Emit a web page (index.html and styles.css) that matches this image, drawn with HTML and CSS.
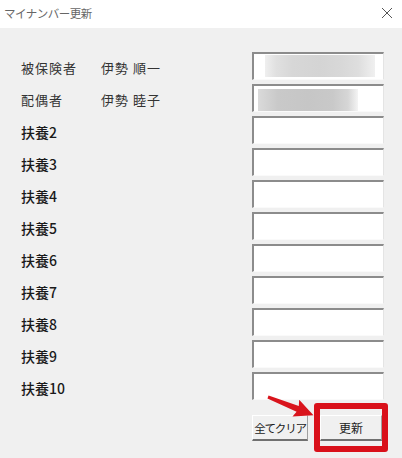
FILE: index.html
```html
<!DOCTYPE html>
<html lang="ja">
<head>
<meta charset="utf-8">
<link rel="stylesheet" href="styles.css">
</head>
<body>
<div class="window">
  <div class="titlebar">
    <span class="title">マイナンバー更新</span>
    <svg class="close" width="12" height="12" viewBox="0 0 12 12"><path d="M1 1 L11 11 M11 1 L1 11" stroke="#555" stroke-width="1" fill="none"/></svg>
  </div>
  <div class="form">
    <div class="row"><span class="label light">被保険者</span><span class="name">伊勢 順一</span><div class="box"><span class="blur b1"></span></div></div>
    <div class="row"><span class="label light">配偶者</span><span class="name">伊勢 睦子</span><div class="box"><span class="blur b2"></span></div></div>
    <div class="row"><span class="label">扶養2</span><div class="box"></div></div>
    <div class="row"><span class="label">扶養3</span><div class="box"></div></div>
    <div class="row"><span class="label">扶養4</span><div class="box"></div></div>
    <div class="row"><span class="label">扶養5</span><div class="box"></div></div>
    <div class="row"><span class="label">扶養6</span><div class="box"></div></div>
    <div class="row"><span class="label">扶養7</span><div class="box"></div></div>
    <div class="row"><span class="label">扶養8</span><div class="box"></div></div>
    <div class="row"><span class="label">扶養9</span><div class="box"></div></div>
    <div class="row"><span class="label">扶養10</span><div class="box"></div></div>
    <div class="buttons">
      <button class="btn clear">全てクリア</button>
      <button class="btn update">更新</button>
      <span class="highlight"></span>
      <svg class="arrow" width="60" height="34" viewBox="0 0 60 34"><path d="M8.56 6.61 L38.81 17.09 L39.18 10.78 L53.47 26.18 L32.5 27.48 L36.59 22.65 L7.44 9.39 Z" fill="#d9141c"/></svg>
    </div>
  </div>
</div>
</body>
</html>
```
FILE: styles.css
```css
* { box-sizing: border-box; }
body {
  margin: 0;
  background: #f0f0f0;
  font-family: "Noto Sans CJK JP", "Noto Sans", sans-serif;
}
.window { width: 402px; height: 458px; background: #f0f0f0; }
.titlebar {
  height: 28px;
  background: #fff;
  display: flex;
  align-items: center;
  justify-content: space-between;
  padding: 0 9px 2px 4px;
}
.title { font-size: 11.5px; color: #666; letter-spacing: -0.5px; }
.close { display: block; }
.form {
  padding: 24px 18px 0 21px;
  display: flex;
  flex-direction: column;
  gap: 4px;
}
.row {
  height: 28px;
  display: flex;
  align-items: center;
}
.label {
  font-size: 14px;
  font-weight: 500;
  color: #1a1a1a;
  padding-top: 3px;
  width: 80px;
}
.label.light { font-size: 13px; font-weight: 400; color: #333; letter-spacing: 1px; }
.name { font-size: 13px; color: #333; padding-top: 3px; letter-spacing: 1px; width: 151px; }
.label + .box { margin-left: 151px; }
.box {
  width: 132px;
  height: 28px;
  background: #fff;
  border-top: 2px solid #8c8c8c;
  border-left: 2px solid #8c8c8c;
  border-right: 1px solid #e4e4e4;
  border-bottom: 1px solid #fafafa;
  padding: 1px 0 0 0;
  display: flex;
}
.name + .box { margin-left: 0; }
.blur { display: block; height: 22px; }
.b1 {
  margin-left: 11px;
  width: 110px;
  background: linear-gradient(90deg, #efefef 0, #e0e0e0 10%, #d7d7d7 25%, #d4d4d4 50%, #d8d8d8 70%, #dedede 85%, #f0f0f0 100%);
}
.b2 {
  margin-left: 4px;
  width: 100px;
  margin-top: 2px;
  background: linear-gradient(90deg, #dadada 0, #c9c9c9 20%, #c6c6c6 50%, #c9c9c9 75%, #d6d6d6 90%, #f4f4f4 100%);
}
.buttons {
  position: relative;
  display: flex;
  gap: 12px;
  margin-top: 11px;
  padding-left: 231px;
}
.btn {
  height: 26px;
  background: #f0f0f0;
  border: none;
  border-top: 1px solid #fff;
  border-left: 1px solid #fff;
  border-right: 1px solid #a0a0a0;
  border-bottom: 2px solid #707070;
  font-family: "Noto Sans CJK JP", sans-serif;
  font-size: 12px;
  color: #222;
  padding: 0;
  white-space: nowrap;
}
.clear { width: 56px; font-size: 11.5px; letter-spacing: -1.2px; }
.update { width: 62px; }
.highlight {
  position: absolute;
  left: 293px;
  top: -12px;
  width: 74px;
  height: 49px;
  border: 6px solid #d9101a;
  border-radius: 3px;
}
.arrow {
  position: absolute;
  left: 239px;
  top: -26px;
}
```
